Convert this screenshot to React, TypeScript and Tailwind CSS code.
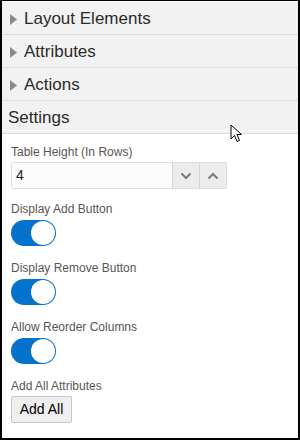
import React from 'react';

const sections = ['Layout Elements', 'Attributes', 'Actions'];

const Toggle: React.FC = () => (
  <div className="mt-[3px] flex h-[26px] w-[45px] items-center justify-end rounded-full bg-[#0572ce] px-px">
    <div className="h-[24px] w-[24px] rounded-full bg-white" />
  </div>
);

const Label: React.FC<{ text: string; className?: string }> = ({ text, className }) => (
  <div className={`text-[12px] leading-[16px] text-[#5a5552] ${className ?? ''}`}>{text}</div>
);

const App: React.FC = () => {
  return (
    <div className="relative h-[440px] w-[300px] overflow-hidden border-x-2 border-t border-b-2 border-black bg-white font-['Liberation_Sans',Arial,sans-serif]">
      <div className="h-px bg-white" />
      {sections.map((s) => (
        <div
          key={s}
          className="flex h-[33px] items-center border-b border-[#dcdcdc] bg-[#f2f2f2] pl-[8px] pt-[2px] text-[17px] text-[#2b2b2b]"
        >
          <svg width="7" height="11" viewBox="0 0 7 11" className="mr-[7px]">
            <path d="M0 0 L7 5.5 L0 11 Z" fill="#8a8a8a" />
          </svg>
          {s}
        </div>
      ))}
      <div className="flex h-[33px] items-center border-b border-[#dcdcdc] bg-[#f2f2f2] pl-[6px] pt-[2px] text-[17px] text-[#2b2b2b]">
        Settings
      </div>

      <div className="px-[9px] pt-[10px]">
        <Label text="Table Height (In Rows)" />
        <div className="mt-[2px] flex h-[27px] w-[216px] rounded-[2px] border border-[#dedede]">
          <div className="flex flex-1 items-center bg-[#fcfcfc] pl-[4px] text-[14px] text-[#222]">4</div>
          <div className="flex w-[27px] items-center justify-center border-l border-[#d4d4d4] bg-[#ececec]">
            <svg width="12" height="8" viewBox="0 0 12 8">
              <path d="M1.5 1.5 L6 6 L10.5 1.5" fill="none" stroke="#7a7a7a" strokeWidth="2" />
            </svg>
          </div>
          <div className="flex w-[27px] items-center justify-center border-l border-[#d4d4d4] bg-[#ececec]">
            <svg width="12" height="8" viewBox="0 0 12 8">
              <path d="M1.5 6.5 L6 2 L10.5 6.5" fill="none" stroke="#7a7a7a" strokeWidth="2" />
            </svg>
          </div>
        </div>

        <Label text="Display Add Button" className="mt-[12px]" />
        <Toggle />

        <Label text="Display Remove Button" className="mt-[14px]" />
        <Toggle />

        <Label text="Allow Reorder Columns" className="mt-[14px]" />
        <Toggle />

        <Label text="Add All Attributes" className="mt-[14px]" />
        <button className="mt-[2px] h-[27px] w-[61px] rounded-[2px] border border-[#c6c6c6] bg-[#efefef] text-[14px] text-black">
          Add All
        </button>
      </div>

      <svg width="13" height="20" viewBox="0 0 13 20" className="absolute left-[228px] top-[123px]">
        <path
          d="M1 1 L1 15 L4.5 11.5 L7 17.5 L9.5 16.5 L7 10.5 L11.5 10.5 Z"
          fill="white"
          stroke="black"
          strokeWidth="1"
          strokeLinejoin="round"
        />
      </svg>
    </div>
  );
};

export default App;
